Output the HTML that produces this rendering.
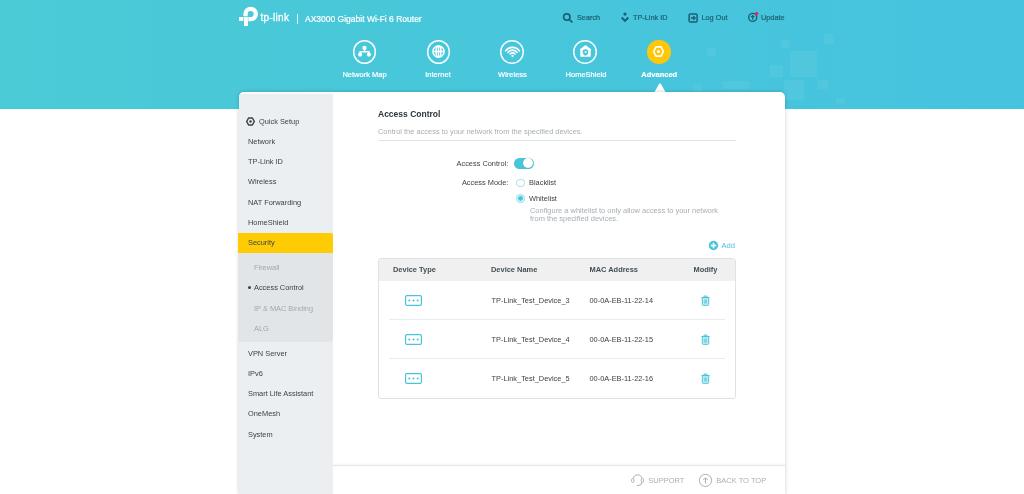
<!DOCTYPE html>
<html><head><meta charset="utf-8">
<style>
*{box-sizing:border-box;margin:0;padding:0}
html,body{width:1024px;height:494px;overflow:hidden;background:#fff;font-family:"Liberation Sans",Arial,sans-serif;}
body{position:relative;color:#3b4246}
.hdr,.panel{will-change:transform}
.hdr{position:absolute;left:0;top:0;width:1024px;height:108.5px;background:linear-gradient(to right,#4acbd6 0%,#48c6db 50%,#46c3df 100%);overflow:hidden}
.abs{position:absolute;white-space:nowrap}
.top{font-size:7.3px;color:#1c5f72;top:13.3px;line-height:9px;-webkit-text-stroke:.2px #1c5f72}
.navl{font-size:7.5px;-webkit-text-stroke:.2px #fff;color:#fff;top:70px;line-height:9px;text-align:center;width:80px}
.circ{position:absolute;width:23.8px;height:23.8px;border-radius:50%;box-shadow:inset 0 0 0 1.5px rgba(255,255,255,.95);top:40px;margin-left:.7px}
.panel{position:absolute;left:239px;top:92px;width:546px;height:402px;background:#fff;border-radius:5px 5px 0 0;box-shadow:0 0 4px rgba(0,0,0,.2)}
.side{position:absolute;left:1px;top:0;width:94px;height:402px;background:linear-gradient(to bottom,#fff 0,#fff 1px,#eceff1 2.5px);border-radius:5px 0 0 0}
.side>*{margin-left:-1px;margin-top:1px}
.mi{position:absolute;left:10px;font-size:7.4px;line-height:9px;color:#3b4246;white-space:nowrap}
.sub{position:absolute;left:16px;font-size:7.4px;line-height:9px;color:#a0a8ad;white-space:nowrap}
.t{position:absolute;font-size:7.4px;line-height:9px;white-space:nowrap;color:#3b4246}
</style></head><body>
<div class="hdr">
  <!-- pixel deco -->
  <svg class="abs" style="left:0;top:0" width="1024" height="108" viewBox="0 0 1024 108">
    <g fill="#fff" opacity=".055">
      <rect x="790" y="51" width="27" height="26"/><rect x="784" y="80" width="20" height="20"/>
      <rect x="781" y="40" width="8" height="8"/><rect x="824" y="34" width="10" height="10"/>
      <rect x="707" y="48" width="8.5" height="8.5"/><rect x="770" y="65" width="13" height="12"/>
      <rect x="723" y="81" width="26" height="8"/><rect x="693" y="84.5" width="8.5" height="7"/>
      <rect x="817.5" y="80" width="10.5" height="9"/><rect x="836" y="98" width="9" height="6"/>
    </g>
  </svg>
  <!-- logo -->
  <svg class="abs" style="left:236px;top:4px" width="26" height="26" viewBox="0 0 26 26">
    <path d="M14.7 2.7a7.3 7.3 0 0 1 0 14.6h-2.4v-4.3h2.4a3 3 0 1 0-3-3v2.3H7.4V10a7.3 7.3 0 0 1 7.3-7.3z" fill="#fff"/>
    <rect x="3" y="13" width="4.4" height="3.9" fill="#fff"/>
    <rect x="8" y="13" width="3.9" height="9" fill="#fff"/>
  </svg>
  <div class="abs" style="left:260.5px;top:12px;font-size:10px;line-height:12px;color:#fff;letter-spacing:.3px;-webkit-text-stroke:.3px #fff">tp-link</div>
  <div class="abs" style="left:296.5px;top:14px;width:1px;height:10px;background:#e6f6fa"></div>
  <div class="abs" style="left:305px;top:14px;font-size:8.5px;line-height:10px;color:#fff;-webkit-text-stroke:.2px #fff">AX3000 Gigabit Wi-Fi 6 Router</div>

  <!-- top links -->
  <svg class="abs" style="left:561px;top:11px" width="13" height="13" viewBox="0 0 13 13"><circle cx="5.8" cy="6.1" r="3.2" fill="none" stroke="#1c5f72" stroke-width="1.6"/><path d="M8.3 8.6L10.9 10.9" stroke="#1c5f72" stroke-width="1.7" stroke-linecap="round"/></svg>
  <div class="abs top" style="left:577px">Search</div>
  <svg class="abs" style="left:618.6px;top:11px" width="12" height="12" viewBox="0 0 12 12"><circle cx="6" cy="3.1" r="1.6" fill="#1c5f72"/><path d="M2.7 6.5L6 9.9L9.3 6.5" fill="none" stroke="#1c5f72" stroke-width="2" stroke-linejoin="miter"/></svg>
  <div class="abs top" style="left:633px">TP-Link ID</div>
  <svg class="abs" style="left:687px;top:11.5px" width="12" height="12" viewBox="0 0 12 12"><rect x="2.1" y="1.9" width="8" height="8.2" rx="1.3" fill="none" stroke="#1c5f72" stroke-width="1.5"/><path d="M3.8 6H8M6.2 4.1L8.2 6L6.2 7.9" fill="none" stroke="#1c5f72" stroke-width="1.3"/></svg>
  <div class="abs top" style="left:701.5px">Log Out</div>
  <svg class="abs" style="left:746px;top:10.3px" width="14" height="14" viewBox="0 0 14 14"><circle cx="6.7" cy="7.4" r="4" fill="none" stroke="#1c5f72" stroke-width="1.4"/><path d="M6.7 9.8V5.6M5 7.2L6.7 5.5L8.4 7.2" fill="none" stroke="#1c5f72" stroke-width="1.2"/><circle cx="10.6" cy="3.8" r="1.8" fill="#e0246e"/></svg>
  <div class="abs top" style="left:761px">Update</div>

  <!-- nav -->
  <div class="circ" style="left:352px"></div>
  <div class="circ" style="left:425.9px"></div>
  <div class="circ" style="left:499.2px"></div>
  <div class="circ" style="left:572.8px"></div>
  <div class="abs" style="left:647.1px;top:40.1px;width:23.6px;height:23.6px;border-radius:50%;background:#ffc70a"></div>
  <!-- icons -->
  <svg class="abs" style="left:352px;top:39.3px" width="25" height="25" viewBox="0 0 25 25"><g fill="#fff"><rect x="10.6" y="7" width="3.8" height="3.8" rx=".7"/><circle cx="8.1" cy="15.6" r="2.1"/><circle cx="16.9" cy="15.6" r="2.1"/></g><path d="M12.5 10V12.8M8.1 14.5V12.8H16.9V14.5" fill="none" stroke="#fff" stroke-width="1.4"/></svg>
  <svg class="abs" style="left:426px;top:39.3px" width="25" height="25" viewBox="0 0 25 25"><g fill="none" stroke="#fff" stroke-width="1.5"><circle cx="12.5" cy="12.5" r="5.6"/><ellipse cx="12.5" cy="12.5" rx="2.5" ry="5.6"/><path d="M6.9 12.5H18.1M12.5 6.9V18.1"/></g></svg>
  <svg class="abs" style="left:499.7px;top:38.7px" width="25" height="25" viewBox="0 0 25 25"><g fill="none" stroke="#fff" stroke-width="1.7" stroke-linecap="round"><path d="M5.62 11.8a8.5 8.5 0 0 1 13.75 0"/><path d="M8.01 13.29a5.7 5.7 0 0 1 8.98 0"/><path d="M10.2 14.87a3 3 0 0 1 4.6 0"/></g><circle cx="12.5" cy="17" r="1.15" fill="#fff"/></svg>
  <svg class="abs" style="left:572.8px;top:39.3px" width="25" height="25" viewBox="0 0 25 25"><path d="M12.5 6L18.4 10.5L17.7 11.2V17.7H7.3V11.2L6.6 10.5z" fill="#fff"/><path d="M12.5 10.1c1 .7 1.9 .9 2.7 .9v2.5c0 1.5-1.2 2.6-2.7 3.3c-1.5-.7-2.7-1.8-2.7-3.3v-2.5c.8 0 1.7-.2 2.7-.9z" fill="#48c5dc"/><circle cx="12.6" cy="13.1" r="1.15" fill="#fff"/></svg>
  <svg class="abs" style="left:646.4px;top:39.4px" width="25" height="25" viewBox="0 0 25 25"><path d="M7.6 12.5L10 7.9H15L17.4 12.5L15 17.1H10z" fill="none" stroke="#fff" stroke-width="1.6" stroke-linejoin="round"/><circle cx="12.5" cy="12.5" r="1.55" fill="#fff"/></svg>

  <div class="abs navl" style="left:324.5px">Network Map</div>
  <div class="abs navl" style="left:398px">Internet</div>
  <div class="abs navl" style="left:472.5px">Wireless</div>
  <div class="abs navl" style="left:546px">HomeShield</div>
  <div class="abs navl" style="left:619.3px;font-weight:bold">Advanced</div>
  <svg class="abs" style="left:653.8px;top:82.8px" width="12" height="10" viewBox="0 0 12 10"><path d="M0 10L5.2 .8Q6 -.4 6.8 .8L12 10z" fill="#fff"/></svg>
</div>

<div class="panel">
<div class="abs" style="left:-1px;top:0;width:547px;height:402px">
  <div class="side">
    <svg class="abs" style="left:7px;top:23px" width="11" height="11" viewBox="0 0 11 11"><path d="M1.700 5.500L3.600 2H7.400L9.300 5.500L7.400 9H3.600z" fill="none" stroke="#3b4246" stroke-width="1.500" stroke-linejoin="round"/><circle cx="5.500" cy="5.500" r="1.250" fill="#3b4246"/></svg>
    <div class="mi" style="left:21px;top:24px">Quick Setup</div>
    <div class="mi" style="top:44.1px">Network</div>
    <div class="mi" style="top:64.1px">TP-Link ID</div>
    <div class="mi" style="top:84px">Wireless</div>
    <div class="mi" style="top:104.6px">NAT Forwarding</div>
    <div class="mi" style="top:124.9px">HomeShield</div>
    <div class="abs" style="left:0;top:140px;width:95px;height:20.5px;background:#ffcb05;border-radius:0 2px 2px 0"></div>
    <div class="mi" style="top:144.9px">Security</div>
    <div class="abs" style="left:0;top:159.5px;width:95px;height:89.5px;background:#e2e5e7;border-radius:0 0 3px 3px"></div>
    <div class="sub" style="top:170.2px">Firewall</div>
    <div class="abs" style="left:9.5px;top:193px;width:3px;height:3px;border-radius:50%;background:#3b4246"></div>
    <div class="sub" style="top:190.3px;color:#3b4246">Access Control</div>
    <div class="sub" style="top:210.7px">IP &amp; MAC Binding</div>
    <div class="sub" style="top:231px">ALG</div>
    <div class="mi" style="top:255.6px">VPN Server</div>
    <div class="mi" style="top:275.5px">IPv6</div>
    <div class="mi" style="top:296px">Smart Life Assistant</div>
    <div class="mi" style="top:315.7px">OneMesh</div>
    <div class="mi" style="top:336.8px">System</div>
  </div>

  <div class="t" style="left:140px;top:17px;font-size:8.5px;font-weight:bold;line-height:10px;color:#2b363b">Access Control</div>
  <div class="t" style="left:140px;top:34.5px;color:#a7aeb2;font-size:7.45px">Control the access to your network from the specified devices.</div>
  <div class="abs" style="left:140px;top:48px;width:358px;height:1px;background:#dfe3e5"></div>

  <div class="t" style="left:180px;top:66.5px;width:90.3px;text-align:right">Access Control:</div>
  <div class="abs" style="left:276.2px;top:65.5px;width:19.8px;height:11.4px;border-radius:6px;background:#49c5d9"></div>
  <div class="abs" style="left:285.4px;top:66.3px;width:9.8px;height:9.8px;border-radius:50%;background:#fff;box-shadow:0 0 1px rgba(0,0,0,.25)"></div>
  <div class="t" style="left:180px;top:86px;width:90.3px;text-align:right">Access Mode:</div>
  <div class="abs" style="left:278.3px;top:86.8px;width:8.3px;height:8.3px;border-radius:50%;box-shadow:inset 0 0 0 1px #b4e3ec;background:#fff"></div>
  <div class="t" style="left:291px;top:86px">Blacklist</div>
  <div class="abs" style="left:278.1px;top:102.2px;width:8.6px;height:8.6px;border-radius:50%;box-shadow:inset 0 0 0 1.4px #a9e4ee;background:#fff"></div>
  <div class="abs" style="left:280px;top:104.1px;width:4.8px;height:4.8px;border-radius:50%;background:#49c5d9"></div>
  <div class="t" style="left:291px;top:102px">Whitelist</div>
  <div class="t" style="left:292px;top:114.5px;color:#a7aeb2;font-size:7.45px;line-height:8.6px;white-space:normal;width:200px">Configure a whitelist to only allow access to your network<br>from the specified devices.</div>

  <svg class="abs" style="left:469.8px;top:148.1px" width="11" height="11" viewBox="0 0 11 11"><circle cx="5.5" cy="5.5" r="4.7" fill="#49c5d9"/><path d="M5.5 2.8V8.2M2.8 5.5H8.2" stroke="#fff" stroke-width="1.5"/></svg>
  <div class="t" style="left:483.5px;top:149px;color:#49c5d9;font-size:7.6px">Add</div>

  <!-- table -->
  <div class="abs" style="left:140px;top:166px;width:358px;height:140.6px;border:1px solid #dfe2e4;border-radius:3px;background:#fff;overflow:hidden">
    <div class="abs" style="left:0;top:0;width:358px;height:22px;background:#f0f0f1"></div>
    <div class="abs" style="left:10px;top:60.3px;width:336px;height:1px;background:#e9ebec"></div>
    <div class="abs" style="left:10px;top:99.2px;width:336px;height:1px;background:#e9ebec"></div>
  </div>
  <div class="t" style="left:155px;top:172.7px;font-weight:bold;font-size:7.45px;color:#434f55">Device Type</div>
  <div class="t" style="left:253px;top:172.7px;font-weight:bold;font-size:7.45px;color:#434f55">Device Name</div>
  <div class="t" style="left:351.5px;top:172.7px;font-weight:bold;font-size:7.45px;color:#434f55">MAC Address</div>
  <div class="t" style="left:455.5px;top:172.7px;font-weight:bold;font-size:7.45px;color:#434f55">Modify</div>
  <svg class="abs" style="left:167px;top:202.7px" width="17" height="11" viewBox="0 0 17 11"><rect x=".6" y=".6" width="15.8" height="9.8" rx="1.2" fill="none" stroke="#49c5d9" stroke-width="1.2"/><g fill="#49c5d9"><circle cx="4.3" cy="5.5" r="1.05"/><circle cx="8.5" cy="5.5" r="1.05"/><circle cx="12.7" cy="5.5" r="1.05"/></g></svg>
  <div class="t" style="left:253.6px;top:203.5px">TP-Link_Test_Device_3</div>
  <div class="t" style="left:351.5px;top:203.5px">00-0A-EB-11-22-14</div>
  <svg class="abs" style="left:463.4px;top:202.9px" width="9" height="11" viewBox="0 0 9 11"><rect x="1.3" y="2.7" width="6.4" height="7.6" rx=".8" fill="#cfeff6" stroke="#49c5d9" stroke-width="1"/><path d="M.4 2.5H8.6M3 2.3V1.1H6V2.3" fill="none" stroke="#49c5d9" stroke-width="1"/><path d="M3.3 4.5V8.7M4.5 4.5V8.7M5.7 4.5V8.7" stroke="#49c5d9" stroke-width=".7"/></svg>
  <svg class="abs" style="left:167px;top:241.7px" width="17" height="11" viewBox="0 0 17 11"><rect x=".6" y=".6" width="15.8" height="9.8" rx="1.2" fill="none" stroke="#49c5d9" stroke-width="1.2"/><g fill="#49c5d9"><circle cx="4.3" cy="5.5" r="1.05"/><circle cx="8.5" cy="5.5" r="1.05"/><circle cx="12.7" cy="5.5" r="1.05"/></g></svg>
  <div class="t" style="left:253.6px;top:242.5px">TP-Link_Test_Device_4</div>
  <div class="t" style="left:351.5px;top:242.5px">00-0A-EB-11-22-15</div>
  <svg class="abs" style="left:463.4px;top:241.9px" width="9" height="11" viewBox="0 0 9 11"><rect x="1.3" y="2.7" width="6.4" height="7.6" rx=".8" fill="#cfeff6" stroke="#49c5d9" stroke-width="1"/><path d="M.4 2.5H8.6M3 2.3V1.1H6V2.3" fill="none" stroke="#49c5d9" stroke-width="1"/><path d="M3.3 4.5V8.7M4.5 4.5V8.7M5.7 4.5V8.7" stroke="#49c5d9" stroke-width=".7"/></svg>
  <svg class="abs" style="left:167px;top:280.7px" width="17" height="11" viewBox="0 0 17 11"><rect x=".6" y=".6" width="15.8" height="9.8" rx="1.2" fill="none" stroke="#49c5d9" stroke-width="1.2"/><g fill="#49c5d9"><circle cx="4.3" cy="5.5" r="1.05"/><circle cx="8.5" cy="5.5" r="1.05"/><circle cx="12.7" cy="5.5" r="1.05"/></g></svg>
  <div class="t" style="left:253.6px;top:281.5px">TP-Link_Test_Device_5</div>
  <div class="t" style="left:351.5px;top:281.5px">00-0A-EB-11-22-16</div>
  <svg class="abs" style="left:463.4px;top:280.9px" width="9" height="11" viewBox="0 0 9 11"><rect x="1.3" y="2.7" width="6.4" height="7.6" rx=".8" fill="#cfeff6" stroke="#49c5d9" stroke-width="1"/><path d="M.4 2.5H8.6M3 2.3V1.1H6V2.3" fill="none" stroke="#49c5d9" stroke-width="1"/><path d="M3.3 4.5V8.7M4.5 4.5V8.7M5.7 4.5V8.7" stroke="#49c5d9" stroke-width=".7"/></svg>
  <!-- footer -->
  <div class="abs" style="left:95px;top:372.6px;width:452px;height:1px;background:#e4e6e7;box-shadow:0 -1px 2px rgba(0,0,0,.07)"></div>
  <svg class="abs" style="left:392px;top:380.5px" width="16" height="15" viewBox="0 0 16 15"><path d="M3.2 7.5V6.2a4.4 4.4 0 0 1 8.8 0V8.6a4 4 0 0 1-4 4H6.8" fill="none" stroke="#a9afb3" stroke-width="1"/><rect x="1.6" y="5.6" width="2.4" height="3.8" rx="1" fill="#fff" stroke="#a9afb3" stroke-width=".9"/><rect x="11.3" y="5.6" width="2.2" height="3.8" rx="1" fill="#fff" stroke="#a9afb3" stroke-width=".9"/></svg>
  <div class="t" style="left:410.3px;top:383.5px;color:#a9afb3;font-size:7.5px">SUPPORT</div>
  <svg class="abs" style="left:460px;top:381px" width="15" height="15" viewBox="0 0 15 15"><circle cx="7.5" cy="7.4" r="6.1" fill="none" stroke="#a9afb3" stroke-width="1"/><path d="M7.5 10.4V5M5.3 7L7.5 4.8L9.7 7" fill="none" stroke="#a9afb3" stroke-width="1"/></svg>
  <div class="t" style="left:478.3px;top:383.5px;color:#a9afb3;font-size:7.5px">BACK TO TOP</div>
</div>
</div>
</body></html>
